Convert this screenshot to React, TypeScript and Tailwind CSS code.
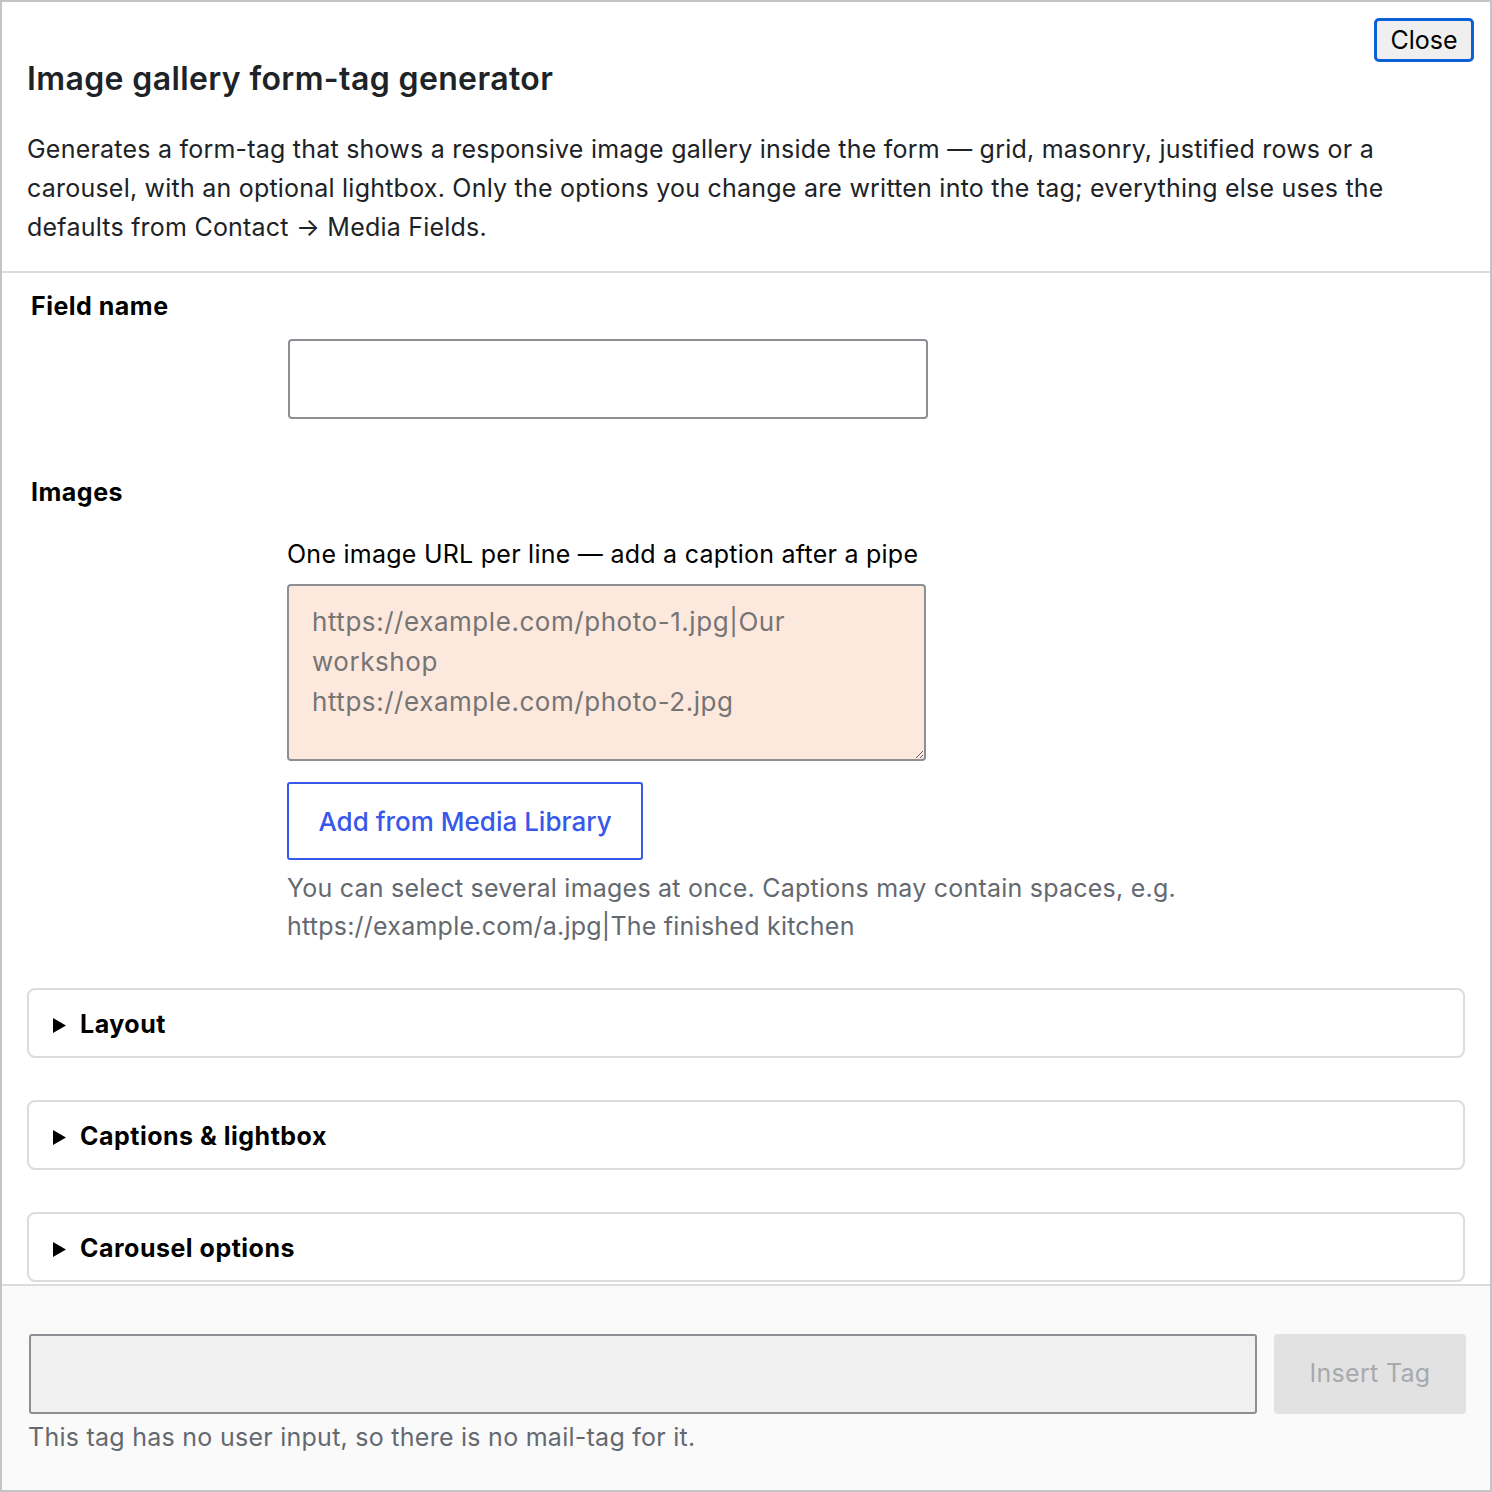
export default function App() {
  const sections = ["Layout", "Captions & lightbox", "Carousel options"];

  return (
    <div className="flex h-[1492px] w-[1492px] flex-col overflow-hidden border-2 border-[#c3c4c7] bg-white font-['Inter','Noto_Sans',sans-serif] text-[#1d2327]">
      <header className="relative border-b-2 border-[#dcdcde] px-[25px] pb-[24px] pt-[57px]">
        <button
          type="button"
          className="absolute right-[16px] top-[16px] h-[44px] w-[100px] rounded-[5px] border-[3px] border-[#0b62d6] bg-[#efefef] text-[25px] leading-none text-black"
        >
          Close
        </button>
        <h1 className="text-[32px] font-semibold leading-[40px] tracking-[0.37px] text-[#1d2327]">
          Image gallery form-tag generator
        </h1>
        <p className="mt-[31px] text-[25px] leading-[39px] tracking-[0.22px] text-[#1d2327]">
          Generates a form-tag that shows a responsive image gallery inside the form — grid, masonry, justified rows or a
          <br />
          carousel, with an optional lightbox. Only the options you change are written into the tag; everything else uses the
          <br />
          defaults from Contact → Media Fields.
        </p>
      </header>

      <main className="min-h-0 flex-1 overflow-hidden px-[25px] pt-[18px]">
        <div className="ml-[4px] text-[25px] font-bold leading-[30px] tracking-[0.5px] text-black">Field name</div>
        <input
          type="text"
          className="ml-[261px] mt-[18px] block h-[80px] w-[640px] rounded-[4px] border-2 border-[#8c8f94] bg-white px-[16px] text-[25px] outline-none"
        />

        <div className="ml-[4px] mt-[58px] text-[25px] font-bold leading-[30px] tracking-[0.5px] text-black">Images</div>
        <div className="ml-[260px] mt-[32px] text-[25px] leading-[30px] tracking-[0.25px] text-black">
          One image URL per line — add a caption after a pipe
        </div>
        <textarea
          className="ml-[260px] mt-[15px] block h-[177px] w-[639px] rounded-[4px] border-2 border-[#8c8f94] bg-[#fde8de] px-[23px] pt-[16px] text-[26px] leading-[40px] tracking-[0.55px] text-[#1d2327] outline-none placeholder:text-[#757575]"
          placeholder={"https://example.com/photo-1.jpg|Our\nworkshop\nhttps://example.com/photo-2.jpg"}
        />
        <button
          type="button"
          className="ml-[260px] mt-[21px] block h-[78px] w-[356px] rounded-[3px] border-2 border-[#3858e9] bg-white text-[26px] font-medium text-[#3858e9]"
        >
          Add from Media Library
        </button>
        <p className="ml-[260px] mt-[9px] text-[25px] leading-[38px] tracking-[0.23px] text-[#646970]">
          You can select several images at once. Captions may contain spaces, e.g.
          <br />
          https://example.com/a.jpg|The finished kitchen
        </p>

        <div className="mt-[43px] flex flex-col gap-[42px]">
          {sections.map((s) => (
            <div
              key={s}
              className="flex h-[70px] shrink-0 items-center gap-[14px] rounded-[8px] border-2 border-[#dcdcde] pl-[24px] pt-[4px]"
            >
              <svg viewBox="0 0 13 15" className="h-[15px] w-[13px]" fill="black">
                <path d="M0 0 L13 7.5 L0 15 Z" />
              </svg>
              <span className="text-[25px] font-bold tracking-[0.5px] text-black">{s}</span>
            </div>
          ))}
        </div>
      </main>

      <footer className="h-[206px] shrink-0 border-t-2 border-[#dcdcde] bg-[#fafafa] pl-[27px] pr-[24px] pt-[48px]">
        <div className="flex gap-[17px]">
          <input
            type="text"
            readOnly
            className="h-[80px] w-[1228px] shrink-0 rounded-[3px] border-2 border-[#8c8f94] bg-[#f0f0f0] outline-none"
          />
          <button
            type="button"
            className="h-[80px] w-[192px] shrink-0 rounded-[4px] bg-[#e2e2e2] text-[25px] tracking-[0.3px] text-[#a7aaad]"
          >
            Insert Tag
          </button>
        </div>
        <p className="-ml-[1px] mt-[7px] text-[25px] leading-[32px] tracking-[0.26px] text-[#646970]">
          This tag has no user input, so there is no mail-tag for it.
        </p>
      </footer>
    </div>
  );
}
